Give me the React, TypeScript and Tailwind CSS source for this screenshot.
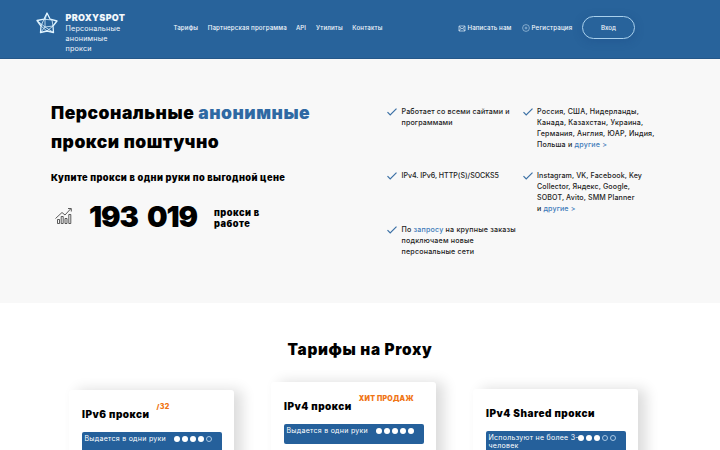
import type { ReactNode } from 'react'

const NAV = [
  { label: 'Тарифы', className: 'w-[25px] tracking-[0.12px]' },
  { label: 'Партнерская программа', className: 'w-[79px] tracking-[0.13px]' },
  { label: 'API', className: 'w-[11px]' },
  { label: 'Утилиты', className: 'w-[27px] tracking-[0.12px]' },
  { label: 'Контакты', className: 'w-[30px] tracking-[0.14px]' },
]

function Logo() {
  return (
    <svg className="w-[22px] h-[22px] shrink-0" viewBox="0 0 22 22" fill="none" stroke="#e0f4ff" strokeWidth="1.3" strokeLinejoin="round">
      <path d="M11 1 14.2 7.2 21 9 17 14 17.5 20.5 11 19 4.5 20.5 5 14 1 8.5 8 7.2Z" />
      <path d="M8 7.2 16 8 17 14 11 19 5 14ZM11 1 9 8 9 15 17 14M9 15 4.5 20.5M9 15 17.5 20.5M1 8.5 9 15" strokeWidth="0.8" />
    </svg>
  )
}

function Check() {
  return (
    <svg className="w-[10px] h-[8px] mt-[2px] shrink-0" viewBox="0 0 10 8" fill="none" stroke="#3b70a5" strokeWidth="1.2">
      <path d="M0.5 4.2 3.2 7 9.5 0.6" />
    </svg>
  )
}

function Feature({ className = 'tracking-[0.15px]', children }: { className?: string; children: ReactNode }) {
  return (
    <li className="flex gap-[4.5px]">
      <Check />
      <div className={`text-[7.1px] leading-[11px] font-medium text-[#222] whitespace-nowrap ${className}`}>{children}</div>
    </li>
  )
}

function Link({ children }: { children: ReactNode }) {
  return <a className="text-[#3d7ab8]">{children}</a>
}

function Dots({ filled }: { filled: number }) {
  return (
    <div className="flex gap-[2px] mt-[4px]">
      {[0, 1, 2, 3, 4].map((i) => (
        <span key={i} className={i < filled ? 'w-[6px] h-[6px] rounded-full bg-white' : 'w-[6px] h-[6px] rounded-full border border-[#a9c8e4]'} />
      ))}
    </div>
  )
}

interface TariffCardProps {
  title: ReactNode
  badge?: ReactNode
  text: ReactNode
  filled: number
  className: string
  barClassName: string
}

function TariffCard({ title, badge, text, filled, className, barClassName }: TariffCardProps) {
  return (
    <div className={`w-[165px] h-[200px] shrink-0 rounded-[3px] bg-white pl-[13px] pr-[12px] shadow-[8px_0_14px_rgba(0,0,0,0.14)] ${className}`}>
      <div className="flex h-[42px] whitespace-nowrap font-black">
        <h3 className="text-[10px] leading-[14px] mt-[17px] tracking-[0.5px]">{title}</h3>
        <span className="text-[7px] leading-[10px] mt-[12px] ml-[7px] tracking-[0.25px] text-[#f07516]">{badge}</span>
      </div>
      <div className={`flex justify-between rounded-[2px] bg-[#25609b] pl-[2.5px] pr-[10px] text-white ${barClassName}`}>
        <div className="w-[88px] text-[7px] leading-[8.5px] pt-[2.5px] tracking-[0.28px] whitespace-nowrap">{text}</div>
        <Dots filled={filled} />
      </div>
    </div>
  )
}

export default function App() {
  return (
    <div className="w-[720px] h-[450px] overflow-hidden bg-white font-['Inter','Noto_Sans',sans-serif] text-black">
      <header className="flex h-[59px] bg-[#28639b] border-b border-[#245789] pl-[36px] text-[#f2f7fb]">
        <div className="flex w-[137.5px] gap-[7.5px] pt-[12px]">
          <Logo />
          <div className="whitespace-nowrap">
            <div className="text-[9px] leading-[12px] font-black tracking-[0.3px]">PROXYSPOT</div>
            <div className="text-[7.2px] leading-[10px] tracking-[0.2px]">
              <div>Персональные</div>
              <div>анонимные</div>
              <div>прокси</div>
            </div>
          </div>
        </div>
        <nav className="flex w-[284.5px] gap-[9.2px] pt-[23px] text-[6.2px] leading-[10px] font-medium whitespace-nowrap">
          {NAV.map((item) => (
            <a key={item.label} className={item.className}>{item.label}</a>
          ))}
        </nav>
        <div className="flex pt-[23px] text-[6.2px] leading-[10px] font-medium whitespace-nowrap">
          <svg className="w-[8px] h-[7px] mt-[1.5px] mr-[1.5px]" viewBox="0 0 8 7" fill="none" stroke="#dcebf7" strokeWidth="0.7">
            <path d="M1 1h6v5H1zM1 1.3 4 4 7 1.3M1 6 3 3.3M7 6 5 3.3" />
          </svg>
          <span className="w-[54px] tracking-[0.08px]">Написать нам</span>
          <svg className="w-[8px] h-[8px] mt-px mr-[2px]" viewBox="0 0 8 8" fill="none" stroke="#bfd8ec" strokeWidth="0.6">
            <circle cx="4" cy="4" r="3.4" />
            <path d="M4 2.6v2.8M2.6 4h2.8" />
          </svg>
          <span className="w-[50.5px] tracking-[0.16px]">Регистрация</span>
          <button className="-mt-[7px] w-[53px] h-[23px] rounded-full border border-[#a9d0ec] shadow-[0_2px_10px_rgba(20,60,120,0.25)]">Вход</button>
        </div>
      </header>

      <section className="flex h-[244px] bg-[#f8f8f8] pl-[51px]">
        <div className="w-[336px] pt-[38.5px] whitespace-nowrap">
          <h1 className="text-[17.5px] leading-[29.5px] font-black tracking-[0.5px]">
            <div>Персональные <span className="text-[#2f69a3]">анонимные</span></div>
            <div>прокси поштучно</div>
          </h1>
          <p className="mt-[14px] text-[9.2px] leading-[13px] font-black tracking-[0.41px]">Купите прокси в одни руки по выгодной цене</p>
          <div className="mt-[15px] flex h-[36px] font-black">
            <svg className="w-[18px] h-[18px] ml-[4px] mt-[8px]" viewBox="0 0 18 18" fill="none" stroke="#333" strokeWidth="0.8">
              <path d="M2.5 16.5v-4h2v4zM6.2 16.5V9.5h2v7zM10 16.5v-5h2v5zM13.8 16.5v-9h2v9zM0.5 11.5 7 5.5 10 8 15.5 2M13 1.5h3.3v3" />
            </svg>
            <div className="ml-[16px] w-[125px] text-[29px] leading-[36px] tracking-[-1.1px] [word-spacing:4.5px]">193 019</div>
            <div className="mt-[8px] text-[9.2px] leading-[11px] tracking-[0.5px]">
              <div>прокси в</div>
              <div>работе</div>
            </div>
          </div>
        </div>
        <ul className="grid grid-cols-[135.5px_140px] grid-rows-[64px_54px_40px] pt-[47px]">
          <Feature>Работает со всеми сайтами и<br />программами</Feature>
          <Feature className="tracking-[0.19px]">Россия, США, Нидерланды,<br />Канада, Казахстан, Украина,<br />Германия, Англия, ЮАР, Индия,<br />Польша и <Link>другие &gt;</Link></Feature>
          <Feature className="tracking-[-0.03px]">IPv4. IPv6, HTTP(S)/SOCKS5</Feature>
          <Feature className="tracking-[0.12px]">Instagram, VK, Facebook, Key<br />Collector, Яндекс, Google,<br />SOBOT, Avito, SMM Planner<br />и <Link>другие &gt;</Link></Feature>
          <Feature className="tracking-[0.2px]">По <Link>запросу</Link> на крупные заказы<br />подключаем новые<br />персональные сети</Feature>
        </ul>
      </section>

      <section className="pt-[36.5px]">
        <h2 className="text-center text-[15.3px] leading-[20px] font-black tracking-[0.7px]">Тарифы на Proxy</h2>
        <div className="mt-[22.5px] flex gap-[37px] pl-[69px]">
          <TariffCard title="IPv6 прокси" badge="/32" text="Выдается в одни руки" filled={4} className="mt-[8px]" barClassName="h-[60px]" />
          <TariffCard title="IPv4 прокси" badge="ХИТ ПРОДАЖ" text="Выдается в одни руки" filled={5} className="" barClassName="h-[20px]" />
          <TariffCard title="IPv4 Shared прокси" text={<>Используют не более 3-х<br />человек</>} filled={3} className="mt-[7px]" barClassName="h-[60px]" />
        </div>
      </section>
    </div>
  )
}
